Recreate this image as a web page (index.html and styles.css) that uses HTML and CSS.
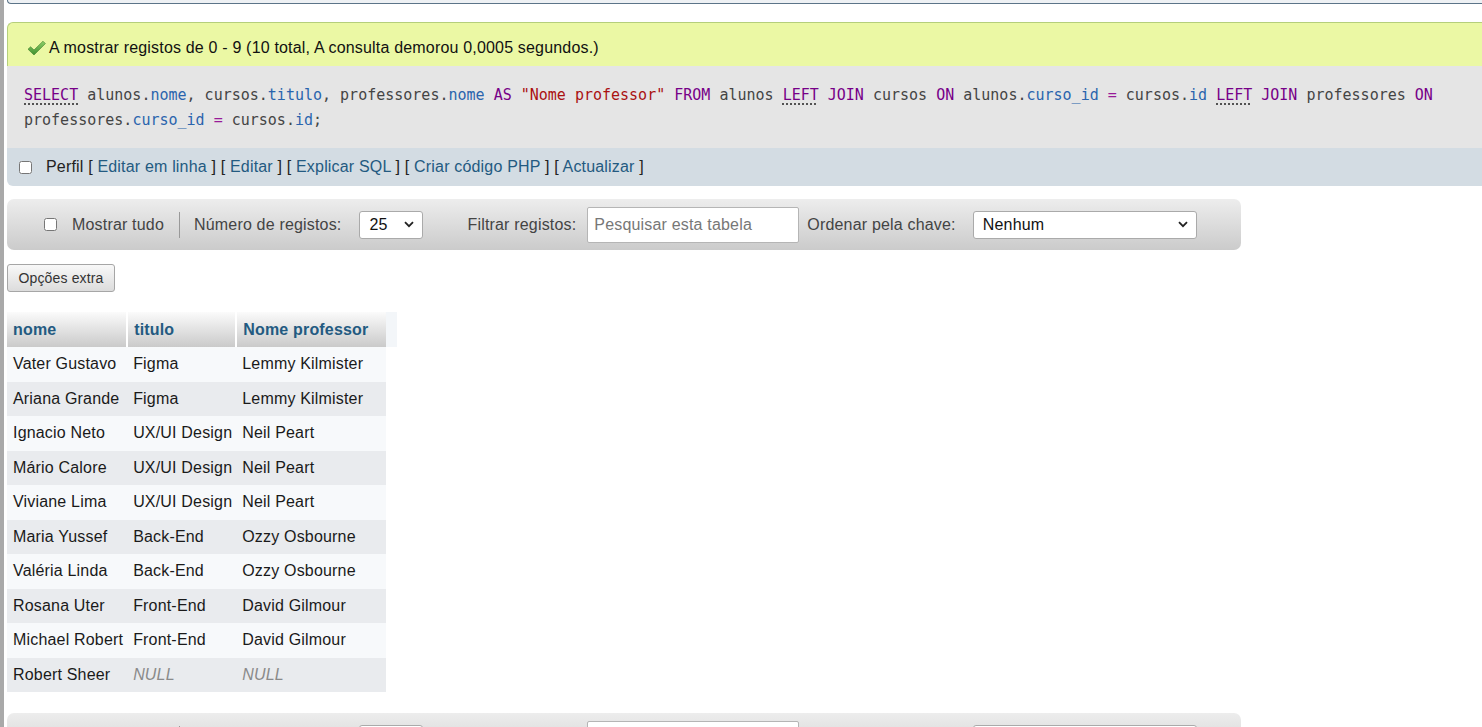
FILE: index.html
```html
<!DOCTYPE html>
<html lang="pt">
<head>
<meta charset="utf-8">
<title>phpMyAdmin - resultado</title>
<link rel="stylesheet" href="styles.css">
</head>
<body>
<div class="page">
  <div class="topbox"></div>

  <div class="success">
    <svg class="ok" width="19" height="16" viewBox="0 0 19 16">
      <defs>
        <linearGradient id="g" x1="0" y1="0" x2="0" y2="1">
          <stop offset="0" stop-color="#8fd16a"/>
          <stop offset="1" stop-color="#3f8f2c"/>
        </linearGradient>
      </defs>
      <path d="M1 9.2 L3.6 6.8 L7 10 L16 1.2 L18.4 3.6 L7 15 Z" fill="url(#g)" stroke="#3d7f2a" stroke-width="0.6"/>
    </svg>
    <span>A mostrar registos de 0 - 9 (10 total, A consulta demorou 0,0005 segundos.)</span>
  </div>

  <div class="sql"><code><span class="kw u">SELECT</span> alunos.<span class="fld">nome</span>, cursos.<span class="fld">titulo</span>, professores.<span class="fld">nome</span> <span class="kw">AS</span> <span class="str">"Nome professor"</span> <span class="kw">FROM</span> alunos <span class="kw u">LEFT</span> <span class="kw">JOIN</span> cursos <span class="kw">ON</span> alunos.<span class="fld">curso_id</span> <span class="op">=</span> cursos.<span class="fld">id</span> <span class="kw u">LEFT</span> <span class="kw">JOIN</span> professores <span class="kw">ON</span> professores.<span class="fld">curso_id</span> <span class="op">=</span> cursos.<span class="fld">id</span>;</code></div>

  <div class="profile">
    <input type="checkbox" class="cb">
    <span class="plinks">Perfil [ <a href="#">Editar em linha</a> ] [ <a href="#">Editar</a> ] [ <a href="#">Explicar SQL</a> ] [ <a href="#">Criar código PHP</a> ] [ <a href="#">Actualizar</a> ]</span>
  </div>

  <div class="nav">
    <input type="checkbox" class="cb navcb">
    <span class="lbl showall">Mostrar tudo</span>
    <span class="sep"></span>
    <span class="lbl">Número de registos:</span>
    <span class="sel sel-small"><span>25</span><svg width="10" height="7" viewBox="0 0 10 7"><path d="M1 1.2 L5 5.2 L9 1.2" fill="none" stroke="#222" stroke-width="1.8"/></svg></span>
    <span class="lbl filt">Filtrar registos:</span>
    <span class="search">Pesquisar esta tabela</span>
    <span class="lbl ord">Ordenar pela chave:</span>
    <span class="sel sel-wide"><span>Nenhum</span><svg width="10" height="7" viewBox="0 0 10 7"><path d="M1 1.2 L5 5.2 L9 1.2" fill="none" stroke="#222" stroke-width="1.8"/></svg></span>
  </div>

  <button class="extra" type="button">Opções extra</button>

  <table class="data">
    <thead>
      <tr>
        <th class="c1">nome</th>
        <th class="c2">titulo</th>
        <th class="c3">Nome professor</th>
        <th class="c4"></th>
      </tr>
    </thead>
    <tbody>
      <tr class="odd"><td>Vater Gustavo</td><td>Figma</td><td>Lemmy Kilmister</td></tr>
      <tr class="even"><td>Ariana Grande</td><td>Figma</td><td>Lemmy Kilmister</td></tr>
      <tr class="odd"><td>Ignacio Neto</td><td>UX/UI Design</td><td>Neil Peart</td></tr>
      <tr class="even"><td>Mário Calore</td><td>UX/UI Design</td><td>Neil Peart</td></tr>
      <tr class="odd"><td>Viviane Lima</td><td>UX/UI Design</td><td>Neil Peart</td></tr>
      <tr class="even"><td>Maria Yussef</td><td>Back-End</td><td>Ozzy Osbourne</td></tr>
      <tr class="odd"><td>Valéria Linda</td><td>Back-End</td><td>Ozzy Osbourne</td></tr>
      <tr class="even"><td>Rosana Uter</td><td>Front-End</td><td>David Gilmour</td></tr>
      <tr class="odd"><td>Michael Robert</td><td>Front-End</td><td>David Gilmour</td></tr>
      <tr class="even"><td>Robert Sheer</td><td class="null">NULL</td><td class="null">NULL</td></tr>
    </tbody>
  </table>

  <div class="nav">
    <input type="checkbox" class="cb navcb">
    <span class="lbl showall">Mostrar tudo</span>
    <span class="sep"></span>
    <span class="lbl">Número de registos:</span>
    <span class="sel sel-small"><span>25</span><svg width="10" height="7" viewBox="0 0 10 7"><path d="M1 1.2 L5 5.2 L9 1.2" fill="none" stroke="#222" stroke-width="1.8"/></svg></span>
    <span class="lbl filt">Filtrar registos:</span>
    <span class="search">Pesquisar esta tabela</span>
    <span class="lbl ord">Ordenar pela chave:</span>
    <span class="sel sel-wide"><span>Nenhum</span><svg width="10" height="7" viewBox="0 0 10 7"><path d="M1 1.2 L5 5.2 L9 1.2" fill="none" stroke="#222" stroke-width="1.8"/></svg></span>
  </div>
</div>
</body>
</html>
```

FILE: styles.css
```css
html, body {
  margin: 0;
  padding: 0;
  overflow: hidden;
  background: #fff;
}

body {
  font-family: "Liberation Sans", Arial, sans-serif;
  font-size: 16px;
  letter-spacing: 0.18px;
  color: #111;
}

.page {
  border-left: 4px solid #a9a9a9;
  padding-left: 3px;
  min-height: 760px;
}

.topbox {
  height: 3px;
  background: #eef1f4;
  border-left: 1px solid #5b7488;
  border-bottom: 1px solid #5b7488;
  border-bottom-left-radius: 8px;
}

.success {
  margin-top: 18px;
  height: 44px;
  box-sizing: border-box;
  padding-top: 7px;
  padding-left: 19px;
  display: flex;
  align-items: center;
  background: #ebf8a4;
  border-top: 1px solid #b5cf7b;
  border-left: 1px solid #b5cf7b;
  border-top-left-radius: 6px;
  color: #111;
}

.success .ok {
  margin-right: 3px;
  margin-top: -1px;
}

.sql {
  background: #e5e5e5;
  padding: 17px 20px 15px 17px;
  font-family: "DejaVu Sans Mono", "Liberation Mono", monospace;
  font-size: 15px;
  letter-spacing: 0;
  line-height: 25px;
  color: #444;
}

.sql code {
  font-family: inherit;
  font-size: inherit;
}

.kw { color: #770088; }
.u {
  text-decoration: underline dotted #222;
  text-underline-offset: 4px;
}
.fld { color: #2a64ad; }
.str { color: #aa1111; }
.op { color: #981a98; }

.profile {
  height: 38px;
  display: flex;
  align-items: center;
  background: #d3dce3;
  border-bottom-left-radius: 6px;
  padding-left: 12px;
  color: #111;
}

.cb {
  width: 13px;
  height: 13px;
  margin: 0;
}

.plinks {
  margin-left: 14px;
  white-space: nowrap;
  color: #222;
}

.profile a {
  color: #235a81;
  text-decoration: none;
}

.nav {
  margin-top: 13px;
  width: 1234px;
  height: 51px;
  box-sizing: border-box;
  display: flex;
  align-items: center;
  border-radius: 7px;
  background: linear-gradient(#ededed, #cbcbcb);
  padding-left: 37px;
  color: #444;
}

.lbl {
  color: #444;
  white-space: nowrap;
}

.showall {
  margin-left: 15px;
}

.sep {
  width: 1px;
  height: 26px;
  background: #999;
  margin: 0 14px 0 15px;
}

.sel {
  display: inline-flex;
  align-items: center;
  justify-content: space-between;
  box-sizing: border-box;
  background: #fff;
  border: 1px solid #aaa;
  border-radius: 3px;
  color: #111;
  padding: 0 8px 0 9px;
}

.sel-small {
  width: 64px;
  height: 28px;
  margin-left: 18px;
}

.sel-wide {
  width: 224px;
  height: 28px;
  margin-left: 17px;
}

.filt {
  margin-left: 44px;
}

.search {
  display: inline-flex;
  align-items: center;
  box-sizing: border-box;
  width: 212px;
  height: 36px;
  margin-left: 11px;
  padding-left: 6px;
  background: #fff;
  border: 1px solid #b5b5b5;
  border-radius: 2px;
  color: #777;
}

.ord {
  margin-left: 8px;
}

.extra {
  display: block;
  margin-top: 14px;
  height: 28px;
  width: 108px;
  padding: 0;
  font-family: "Liberation Sans", Arial, sans-serif;
  font-size: 14px;
  letter-spacing: 0.15px;
  color: #333;
  background: linear-gradient(#f8f8f8, #dcdcdc);
  border: 1px solid #a6a6a6;
  border-radius: 3px;
}

.data {
  margin-top: 20px;
  border-collapse: collapse;
  border-spacing: 0;
}

.data th {
  height: 35px;
  padding: 0 4px 0 6px;
  box-sizing: border-box;
  text-align: left;
  font-weight: bold;
  color: #235a81;
  background: linear-gradient(#fbfbfb, #cacaca);
  border-right: 2px solid #fff;
}

.data th.c1 { width: 120px; }
.data th.c2 { width: 109px; }
.data th.c3 { width: 150px; border-right: none; }
.data th.c4 {
  width: 11px;
  padding: 0;
  background: #f3f6f9;
  border-right: none;
}

.data td {
  height: 34.5px;
  padding: 0 4px 0 6px;
  box-sizing: border-box;
  white-space: nowrap;
  color: #1a1a1a;
}

.data tr.odd td { background: #f7f9fb; }
.data tr.even td { background: #e9ebee; }

.data td.null {
  font-style: italic;
  color: #8a8a8a;
}

.data + .nav {
  margin-top: 21px;
}
```
